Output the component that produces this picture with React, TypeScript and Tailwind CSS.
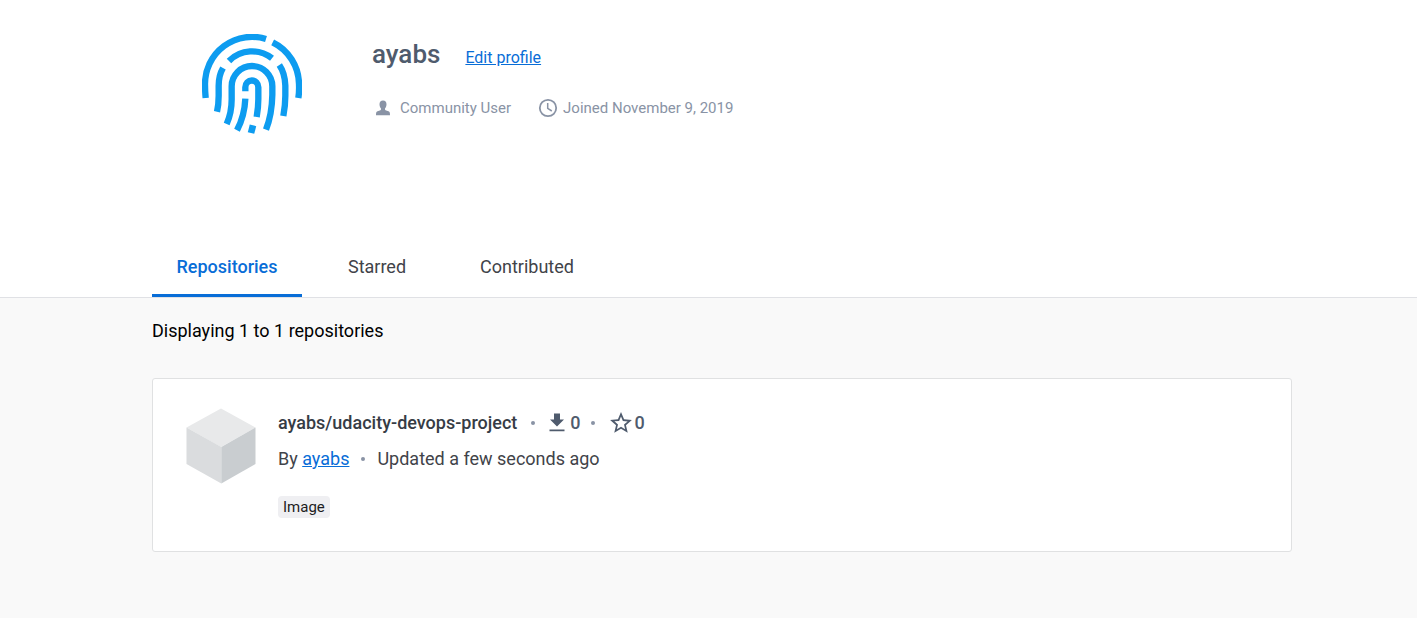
import type { ReactNode } from "react";

function Fingerprint() {
  return (
    <svg viewBox="0 0 300 300" className="size-[100px] shrink-0" fill="none" stroke="#0d9cf0" strokeWidth="19" strokeLinejoin="round" aria-hidden="true">
      <g transform="translate(-30 -30)">
        <path d="M41 222Q39 200 39 180A141 141 0 0 1 222 45" />
        <path d="M242 55A141 141 0 0 1 321 180Q322 204 319 222" />
        <path d="M111 111A97 97 0 0 1 240 103" />
        <path d="M93 132Q80 154 80 185V215Q80 242 75 263" />
        <path d="M262 123Q279 148 280 185V215Q280 244 274 276" />
        <path d="M104 300Q120 265 119 220V187A61 61 0 0 1 241 187V212Q240 270 222 317" />
        <path d="M160 202V190A19 20 0 0 1 199 190V225Q199 250 194 279" />
        <path d="M160 224Q158 275 135 319" />
        <path d="M183 304L177 327" strokeWidth="20" />
      </g>
    </svg>
  );
}

function PersonIcon() {
  return (
    <svg viewBox="0 0 16 16" className="size-4" fill="#8993a5" aria-hidden="true">
      <path d="M8 0.5C5.7 0.5 4.5 2 4.5 4.2C4.5 6 5.2 7.5 6 8.4C6.2 9.5 5.8 10 4.8 10.4L2.5 11.2C1.2 11.7 1 12.8 1 15.3H15C15 12.8 14.8 11.7 13.5 11.2L11.2 10.4C10.2 10 9.8 9.5 10 8.4C10.8 7.5 11.5 6 11.5 4.2C11.5 2 10.3 0.5 8 0.5Z" />
    </svg>
  );
}

function ClockIcon() {
  return (
    <svg viewBox="0 0 20 20" className="size-5" fill="none" stroke="#8993a5" aria-hidden="true">
      <circle cx="10" cy="10" r="8.2" strokeWidth="1.8" />
      <path d="M9.7 5V10.3L13.8 13" strokeWidth="1.5" />
    </svg>
  );
}

function Cube() {
  return (
    <svg viewBox="0 0 70 76" className="h-[76px] w-[70px] shrink-0" aria-hidden="true">
      <path d="M35 0.5L69.5 19.5L35 39L0.5 19.5Z" fill="#e8e9ea" />
      <path d="M0.5 19.5L35.3 39V75.5L0.5 56Z" fill="#dadcde" />
      <path d="M69.5 19.5L35.3 39V75.5L69.5 56Z" fill="#c9cdd0" />
    </svg>
  );
}

function DownloadIcon() {
  return (
    <svg viewBox="0 0 16 20" className="h-5 w-4" fill="#4f5b6d" aria-hidden="true">
      <path d="M5 0.5H11V6.5H15L8 13.5L1 6.5H5ZM0.5 16.4H15.5V18.2H0.5Z" />
    </svg>
  );
}

function StarIcon() {
  return (
    <svg viewBox="1 1 22 22" className="size-6" fill="#4f5b6d" aria-hidden="true">
      <path d="M22 9.24l-7.19-.62L12 2 9.19 8.63 2 9.24l5.46 4.73L5.82 21 12 17.27 18.18 21l-1.63-7.03L22 9.24zM12 15.4l-3.76 2.27 1-4.28-3.32-2.88 4.38-.38L12 6.1l1.71 4.04 4.38.38-3.32 2.88 1 4.28L12 15.4z" />
    </svg>
  );
}

function Dot() {
  return <span className="size-1 rounded-full bg-[#8993a5]" />;
}

function Tab({ selected, children }: { selected?: boolean; children: ReactNode }) {
  return (
    <button
      type="button"
      role="tab"
      aria-selected={!!selected}
      className={
        selected
          ? "w-[150px] cursor-pointer border-b-3 border-[#086dd7] pt-4 pb-4 text-lg font-medium text-[#086dd7]"
          : "w-[150px] cursor-pointer border-b-3 border-transparent pt-4 pb-4 text-lg text-[#414349]"
      }
    >
      {children}
    </button>
  );
}

export default function App() {
  return (
    <div className="min-h-screen bg-[#f9f9f9] font-[Roboto,sans-serif]">
      <header className="border-b border-[#e0e1e5] bg-white pr-[125px] pl-[152px]">
        <div className="flex h-[237px] gap-[70px] pt-[34px] pl-[50px]">
          <Fingerprint />
          <div>
            <div className="flex items-baseline gap-[25px]">
              <h1 className="text-[26px] leading-10 font-medium text-[#4f5b6d]">ayabs</h1>
              <a href="#edit" className="text-base text-[#086dd7] underline">Edit profile</a>
            </div>
            <div className="mt-6 flex items-center text-[15px] leading-5 text-[#8993a5]">
              <span className="flex items-center gap-[9px] pl-[3px]">
                <PersonIcon />
                Community User
              </span>
              <span className="ml-[27px] flex items-center gap-[5px]">
                <ClockIcon />
                Joined November 9, 2019
              </span>
            </div>
          </div>
        </div>
        <div role="tablist" className="flex [&>button]:pt-4 [&>button]:pb-[13px]">
          <Tab selected>Repositories</Tab>
          <Tab>Starred</Tab>
          <Tab>Contributed</Tab>
        </div>
      </header>
      <main className="pt-[19px] pr-[125px] pb-16 pl-[152px]">
        <p className="text-lg text-black">Displaying 1 to 1 repositories</p>
        <article className="mt-[33px] flex gap-[22px] rounded-[3px] border border-[#e0e1e2] bg-white pt-[29px] pr-8 pb-8 pl-[33px]">
          <Cube />
          <div className="pt-px">
            <div className="flex items-center text-lg font-medium text-[#4f5b6d]">
              <h2 className="text-[#363c45]">ayabs/udacity-devops-project</h2>
              <span className="ml-[14px] flex items-center gap-[14px]">
                <Dot />
                <span className="flex items-center gap-[5px]">
                  <DownloadIcon />0
                </span>
                <span className="-ml-1 flex items-center gap-[14px]">
                  <Dot />
                  <span className="flex items-center gap-[2px]">
                    <StarIcon />0
                  </span>
                </span>
              </span>
            </div>
            <div className="mt-2 flex items-center gap-3 text-lg text-[#414349]">
              <span>
                By <a href="#ayabs" className="text-[#086dd7] underline">ayabs</a>
              </span>
              <Dot />
              <span>Updated a few seconds ago</span>
            </div>
            <span className="mt-[23px] inline-block rounded-[4px] bg-[#efeff2] px-[5px] text-[15px] leading-[22px] text-[#1d1d22]">
              Image
            </span>
          </div>
        </article>
      </main>
    </div>
  );
}
